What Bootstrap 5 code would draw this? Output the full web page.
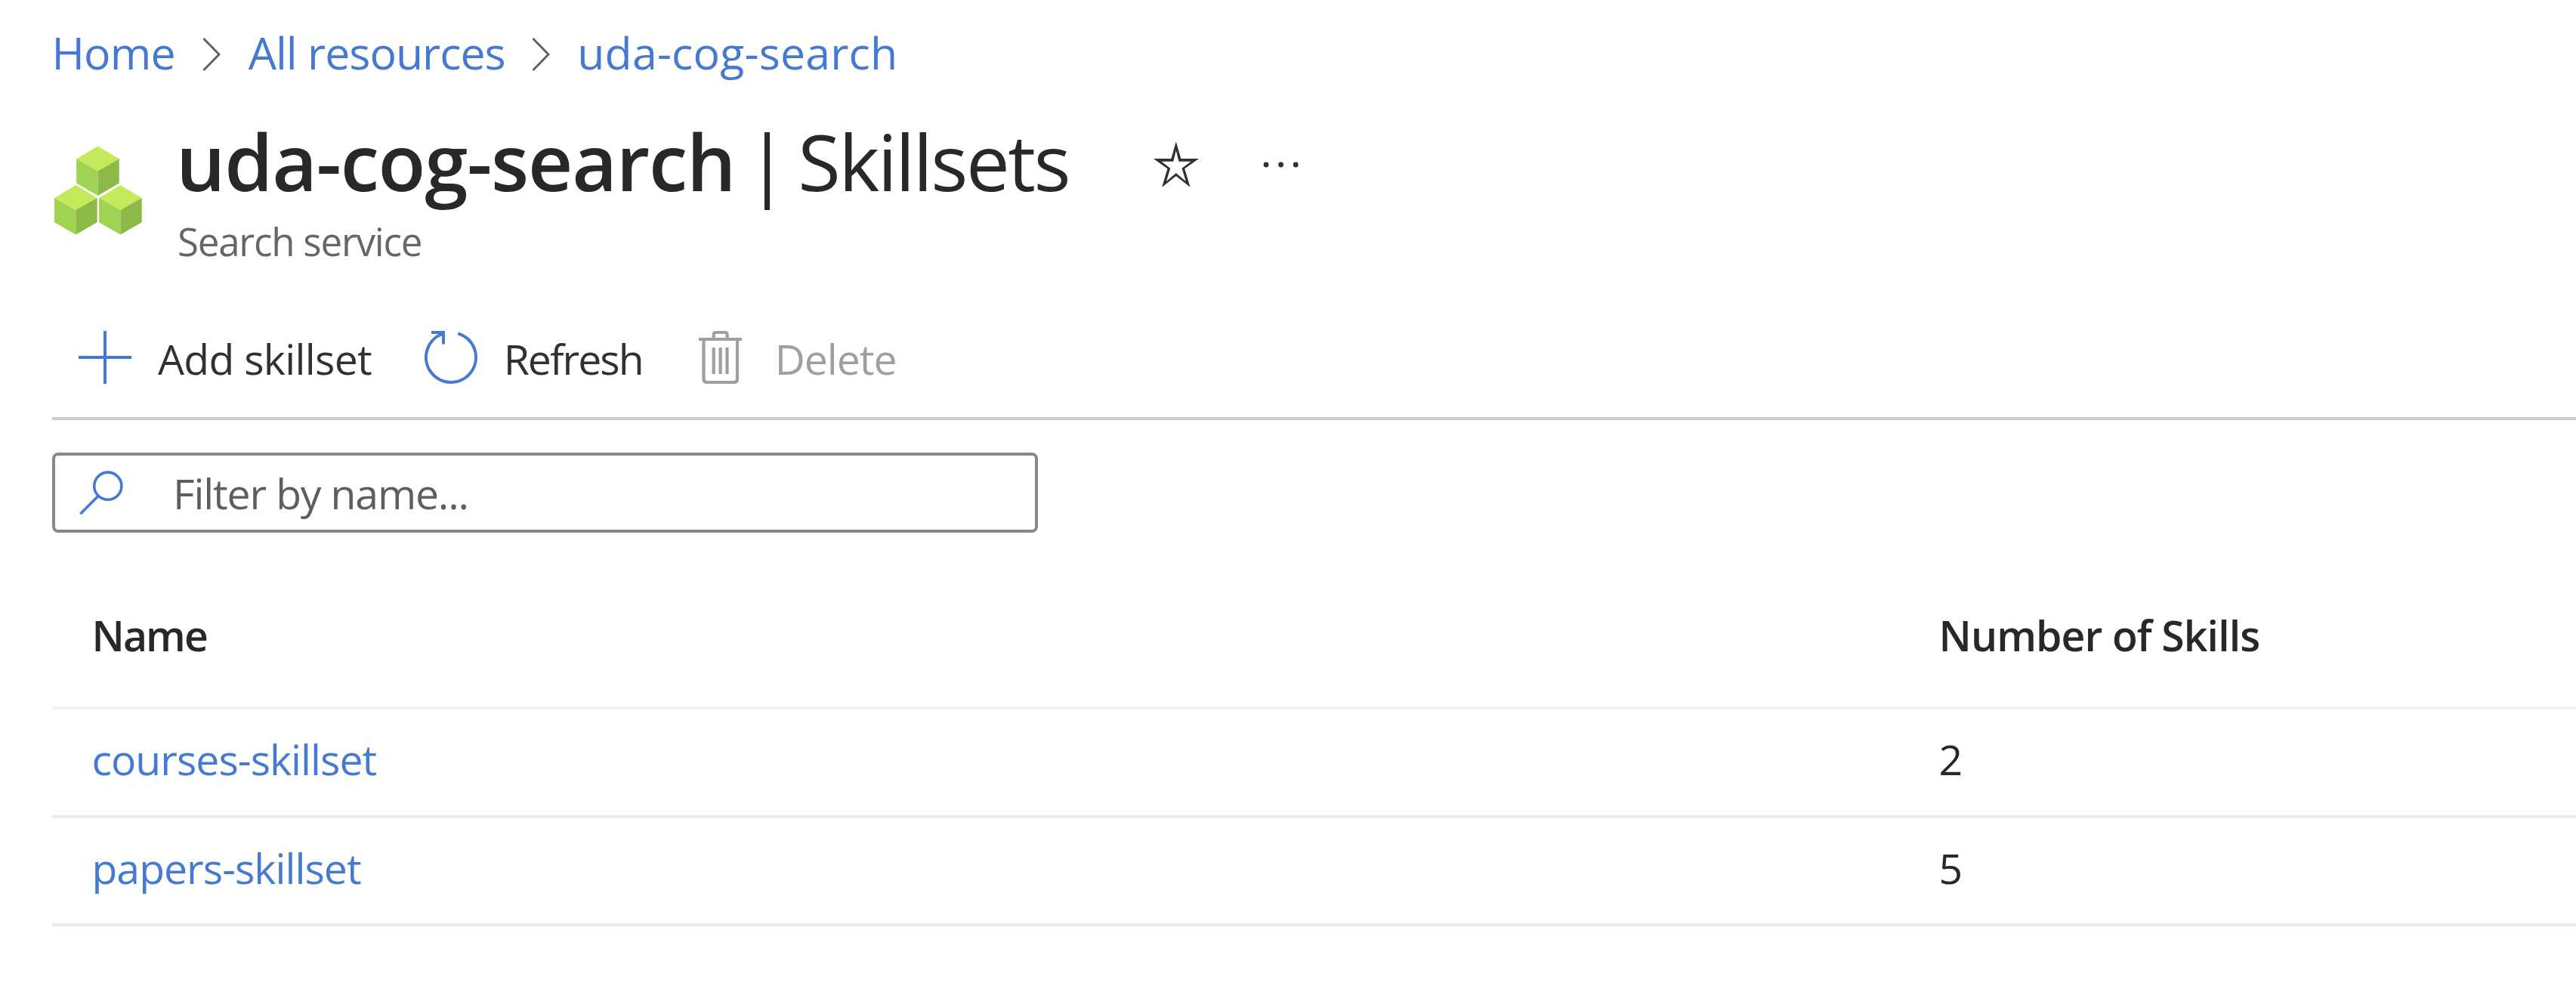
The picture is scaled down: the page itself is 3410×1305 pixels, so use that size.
<!DOCTYPE html>
<html lang="en">
<head>
<meta charset="utf-8">
<meta name="viewport" content="width=device-width, initial-scale=1">
<title>uda-cog-search | Skillsets</title>
<link href="https://cdn.jsdelivr.net/npm/bootstrap@5.3.0/dist/css/bootstrap.min.css" rel="stylesheet">
<style>
  :root { --portal-blue: #4679d1; --portal-ink: #292827; }
  body { font-family: "Open Sans", "Noto Sans", sans-serif; color: var(--portal-ink); background: #fff; overflow: hidden; }
  svg { display: block; flex: none; }
  a, a:hover { color: var(--portal-blue); text-decoration: none; }

  .crumbs { height: 138px; padding-left: 68.5px; font-size: 59px; line-height: 138px; white-space: nowrap; }
  .crumb-home { letter-spacing: -.9px; }
  .crumb-all { letter-spacing: -1px; }
  .crumb-service { letter-spacing: .2px; }
  .crumbs svg { margin: 5px 36.5px 0; }
  .crumbs .sep-last { margin: 5px 36.5px 0 35px; }

  .page-head { padding-left: 72px; height: 258px; }
  .service-icon { margin: 55px 45px 0 0; }
  .title-row { height: 147px; font-size: 103px; line-height: 147px; white-space: nowrap; }
  .title-row span { padding-top: 4px; }
  .title-name { font-weight: 600; letter-spacing: -1.2px; }
  .title-bar { margin: 0 12.5px 0 14px; }
  .title-blade { letter-spacing: -2.5px; }
  .title-row .star { margin: 12px 85.5px 0 111.5px; }
  .title-row .dots { margin-top: 12px; }
  .service-kind { padding-left: 2px; font-size: 51px; line-height: 68px; letter-spacing: -1.2px; color: #666; }

  .commands { margin-left: 69px; padding-left: 35px; height: 160px; border-bottom: 4px solid #ccc; }
  .commands .btn { --bs-btn-disabled-opacity: 1; --bs-btn-disabled-color: #a19f9d; --bs-btn-color: #323130; padding: 0; border: 0; border-radius: 0; font-size: 55.3px; line-height: 154px; height: 154px; }
  .commands .btn span { padding-top: 4px; }
  .cmd-add { letter-spacing: -.7px; gap: 35px; }
  .cmd-refresh { letter-spacing: -1.95px; gap: 35px; margin-left: 69.7px; }
  .cmd-delete { letter-spacing: -1.05px; gap: 44px; margin-left: 74px; }

  .filter-box { margin: 43px 0 0 69px; width: 1305px; height: 106px; border: 4px solid #8a8886; border-radius: 8px; padding-left: 32px; }
  .filter-box .form-control { border: 0; box-shadow: none; background: transparent; padding: 1px 0 0; margin-left: 64px; height: 98px; font-size: 55.3px; letter-spacing: -1.15px; }
  .filter-box .form-control::placeholder { color: #605e5c; opacity: 1; }

  .skill-table { margin: 38px 0 0 69px; width: 3341px; table-layout: fixed; border-collapse: separate; border-spacing: 0; --bs-table-bg: transparent; --bs-table-color: var(--portal-ink); color: var(--portal-ink); font-size: 55.3px; }
  .skill-table > :not(caption) > * > * { padding: 0 0 0 52.5px; border-bottom: 4px solid #edebe9; vertical-align: top; }
  .skill-table > thead > tr > th { border-bottom-color: #f3f2f1; font-weight: 600; padding-top: 3px; line-height: 189px; height: 196px; }
  .skill-table > tbody > tr > td { line-height: 131px; height: 144px; letter-spacing: -.96px; }
  .skill-table > tbody > tr:last-child > td { height: 143px; }
  .col-name { width: 2445px; }
  .skill-table .head-name { letter-spacing: -1.9px; }
  .skill-table .head-count { letter-spacing: -.9px; }
</style>
</head>
<body>
<nav class="crumbs d-flex align-items-center" aria-label="breadcrumb">
  <a class="crumb-home" href="#">Home</a>
  <svg width="24" height="44" viewBox="0 0 24 44" fill="none" stroke="#605e5c" stroke-width="2.8"><path d="M1.5 1 22 22 1.5 43"/></svg>
  <a class="crumb-all" href="#">All resources</a>
  <svg class="sep-last" width="24" height="44" viewBox="0 0 24 44" fill="none" stroke="#605e5c" stroke-width="2.8"><path d="M1.5 1 22 22 1.5 43"/></svg>
  <a class="crumb-service" href="#">uda-cog-search</a>
</nav>

<header class="page-head d-flex align-items-start">
  <svg class="service-icon" width="116" height="118" viewBox="72 193 116 118">
    <g id="cube">
      <path fill="#c3ea5b" d="M129.5 193.5 157.8 210.3 129.5 226.5 101.2 210.3z"/>
      <path fill="#9fd452" d="M101.2 210.3 129.5 226.5V259L101.2 242.6z"/>
      <path fill="#8cb948" d="M157.8 210.3 129.5 226.5V259L157.8 242.6z"/>
    </g>
    <use href="#cube" x="-29.2" y="51.6"/>
    <use href="#cube" x="29.9" y="51.6"/>
  </svg>
  <div>
    <div class="title-row d-flex align-items-center">
      <span class="title-name">uda-cog-search</span><span class="title-bar">|</span><span class="title-blade">Skillsets</span>
      <svg class="star" width="60" height="62" viewBox="0 0 60 62" fill="#323130"><path fill-rule="evenodd" d="M29.8.5 36.3 23H60L41.2 36.3 48.5 60.7 29.8 46 11.2 60.7 18.4 36.3 0 23H23.4zM29.8 12.3 26.2 26.7H10.5L22.2 35.7 17 53 29.8 42 42.8 53 37.5 35.7 49.5 26.7H33.5z"/></svg>
      <svg class="dots" width="48" height="8" viewBox="0 0 48 8" fill="#323130"><circle cx="4" cy="4" r="3.4"/><circle cx="23.6" cy="4" r="3.4"/><circle cx="43.2" cy="4" r="3.4"/></svg>
    </div>
    <div class="service-kind">Search service</div>
  </div>
</header>

<div class="commands d-flex align-items-start" role="toolbar">
  <button type="button" class="btn cmd-add d-flex align-items-center">
    <svg width="70" height="70" viewBox="0 0 70 70" stroke="#4679d1" stroke-width="4"><path d="M35 0V70M0 35H70"/></svg>
    <span>Add skillset</span>
  </button>
  <button type="button" class="btn cmd-refresh d-flex align-items-center">
    <svg width="70" height="70" viewBox="0 0 70 70" fill="none" stroke="#4679d1" stroke-width="4"><path d="M44.2 3.3A33 33 0 1 1 24.5 3.7M9 2H25V17.5"/></svg>
    <span>Refresh</span>
  </button>
  <button type="button" class="btn cmd-delete d-flex align-items-center" disabled>
    <svg width="57" height="70" viewBox="0 0 57 70" fill="none" stroke="#a19f9d" stroke-width="4.2"><path d="M0 11H57M6.5 11V63.5Q6.5 68 11 68H46.5Q51 68 51 63.5V11M19.7 11V5Q19.7 2 22.7 2H34.6Q37.6 2 37.6 5V11M19.7 22V57M28.6 22V57M37.5 22V57"/></svg>
    <span>Delete</span>
  </button>
</div>

<div class="filter-box d-flex align-items-center">
  <svg width="60" height="60" viewBox="0 0 60 60" fill="none" stroke="#4679d1" stroke-width="3.6" stroke-linecap="round"><circle cx="37.8" cy="21.2" r="18.1"/><path d="M25 34.5 2.5 57"/></svg>
  <input class="form-control" type="text" placeholder="Filter by name..." aria-label="Filter by name">
</div>

<table class="table skill-table">
  <colgroup><col class="col-name"><col></colgroup>
  <thead><tr><th class="head-name">Name</th><th class="head-count">Number of Skills</th></tr></thead>
  <tbody>
    <tr><td><a href="#">courses-skillset</a></td><td>2</td></tr>
    <tr><td><a href="#">papers-skillset</a></td><td>5</td></tr>
  </tbody>
</table>
<script src="https://cdn.jsdelivr.net/npm/bootstrap@5.3.0/dist/js/bootstrap.bundle.min.js"></script>
</body>
</html>
